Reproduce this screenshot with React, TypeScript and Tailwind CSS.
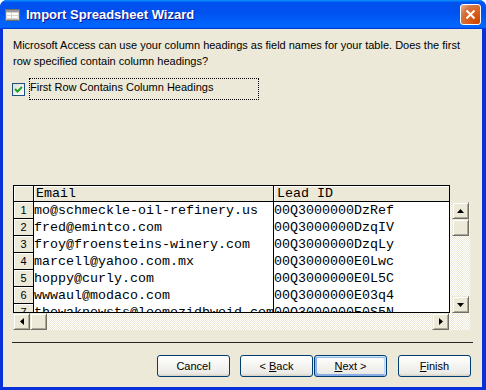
const rowData = [
  ["mo@schmeckle-oil-refinery.us", "00Q3000000DzRef"],
  ["fred@emintco.com", "00Q3000000DzqIV"],
  ["froy@froensteins-winery.com", "00Q3000000DzqLy"],
  ["marcell@yahoo.com.mx", "00Q3000000E0Lwc"],
  ["hoppy@curly.com", "00Q3000000E0L5C"],
  ["wwwaul@modaco.com", "00Q3000000E03q4"],
  ["thewaknewsts@loemozidbwoid.com", "00Q3000000E0S5N"],
];

const hatch =
  "bg-[repeating-conic-gradient(#ece9d8_0%_25%,#ffffff_0%_50%)] bg-size-[2px_2px]";

const scrollBtn =
  "w-[17px] h-[17px] shrink-0 flex items-center justify-center bg-[#ECE9D8] border border-t-[#ECE9D8] border-l-[#ECE9D8] border-r-[#716F64] border-b-[#716F64] shadow-[inset_1px_1px_#ffffff,inset_-1px_-1px_#ACA899]";

const Arrow = ({ dir }: { dir: "up" | "down" | "left" | "right" }) => {
  const pts = {
    up: "3.5,0 7,4 0,4",
    down: "0,0 7,0 3.5,4",
    left: "4,0 4,7 0,3.5",
    right: "0,0 4,3.5 0,7",
  }[dir];
  const vertical = dir === "up" || dir === "down";
  return (
    <svg width={vertical ? 7 : 4} height={vertical ? 4 : 7}>
      <polygon points={pts} fill="#000" />
    </svg>
  );
};

const Button = ({
  children,
  primary,
}: {
  children: React.ReactNode;
  primary?: boolean;
}) => (
  <div
    className={
      primary
        ? "w-[73px] h-[22px] flex items-center justify-center rounded-[3px] border border-[#003C74] bg-[linear-gradient(180deg,#ffffff,#ECEBE6_86%,#D6D0C5)] shadow-[inset_-1px_1px_#cee7ff,inset_1px_2px_#98b8ea,inset_-2px_2px_#bcd4f6,inset_1px_-1px_#89ade4,inset_2px_-2px_#89ade4] text-[11px] text-black"
        : "w-[73px] h-[22px] flex items-center justify-center rounded-[3px] border border-[#003C74] bg-[linear-gradient(180deg,#ffffff,#ECEBE6_86%,#D6D0C5)] text-[11px] text-black"
    }
  >
    <span className="whitespace-pre">{children}</span>
  </div>
);

export default function App() {
  return (
    <div className="w-[486px] h-[390px] flex flex-col bg-[#0831D9] rounded-t-[7px] overflow-hidden font-['Liberation_Sans',Arial,sans-serif] select-none">
      {/* title bar */}
      <div className="h-[29px] shrink-0 flex items-center pl-[5px] pr-[5px] bg-[linear-gradient(180deg,#0997ff,#0053ee_8%,#0050ee_40%,#0066ff_88%,#0066ff_93%,#005bff_95%,#003dd7_96%,#003dd7)]">
        <svg width="15" height="12" viewBox="0 0 15 12">
          <rect x="0.5" y="0.5" width="14" height="11" fill="#D8D4CC" stroke="#6D6D6D" />
          <rect x="1" y="1" width="13" height="2" fill="#9A9A9A" />
          <rect x="2" y="4" width="4" height="2" fill="#ffffff" />
          <rect x="7" y="4" width="6" height="2" fill="#ffffff" />
          <rect x="2" y="7" width="4" height="2" fill="#ffffff" />
          <rect x="7" y="7" width="6" height="2" fill="#ffffff" />
          <rect x="2" y="10" width="11" height="1" fill="#B0B0B0" />
        </svg>
        <span className="ml-[6px] text-[13px] font-bold text-white [text-shadow:1px_1px_#0F1089]">
          Import Spreadsheet Wizard
        </span>
        <div className="flex-1" />
        <div className="w-[21px] h-[21px] rounded-[3px] border border-white bg-[radial-gradient(circle_at_90%_90%,#CC4600_0%,#DC6527_55%,#CD7546_70%,#EE9C7A_90%)] flex items-center justify-center">
          <svg width="11" height="11" viewBox="0 0 11 11">
            <path d="M1.5 1.5 L9.5 9.5 M9.5 1.5 L1.5 9.5" stroke="#fff" strokeWidth="2" />
          </svg>
        </div>
      </div>

      {/* body */}
      <div className="flex-1 ml-[3px] mr-[4px] mb-[3px] bg-[#ECE9D8] flex flex-col text-black">
        <p className="mt-[8px] ml-[10px] text-[11px] leading-[16px]">
          Microsoft Access can use your column headings as field names for your table. Does the first
          <br />
          row specified contain column headings?
        </p>

        <div className="mt-[9px] ml-[9px] flex items-center h-[22px]">
          <div className="w-[13px] h-[13px] border border-[#1C5180] bg-[linear-gradient(135deg,#DCDCD7,#ffffff)] flex items-center justify-center">
            <svg width="9" height="9" viewBox="0 0 9 9">
              <path d="M1 4 L3.5 6.5 L8 2" stroke="#21A121" strokeWidth="2" fill="none" />
            </svg>
          </div>
          <div className="ml-[4px] w-[230px] h-[22px] border border-dotted border-black text-[11px] leading-[16px]">
            First Row Contains Column Headings
          </div>
        </div>

        {/* grid */}
        <div className="mt-[85px] ml-[10px] flex">
          <div className="w-[437px] h-[128px] border border-black bg-white overflow-hidden font-['Liberation_Mono','Courier_New',monospace] text-[13.33px] leading-[17px]">
            <div className="flex h-[16px] border-b border-black bg-[#ECE9D8]">
              <div className="w-[20px] shrink-0 border-r border-black shadow-[inset_1px_1px_#ffffff]" />
              <div className="w-[240px] shrink-0 border-r border-black pl-[2px] leading-[15px] shadow-[inset_1px_1px_#ffffff]">
                Email
              </div>
              <div className="flex-1 pl-[3px] leading-[15px] shadow-[inset_1px_1px_#ffffff]">Lead ID</div>
            </div>
            {rowData.map(([email, id], i) => (
              <div key={i} className="flex h-[17px]">
                <div className="w-[20px] shrink-0 border-r border-b border-black bg-[#ECE9D8] shadow-[inset_1px_1px_#ffffff] text-center font-['Liberation_Sans',Arial,sans-serif] text-[11px] leading-[16px]">
                  {i + 1}
                </div>
                <div className="w-[240px] shrink-0 border-r border-black whitespace-nowrap overflow-hidden">
                  {email}
                </div>
                <div className="flex-1 whitespace-nowrap overflow-hidden">{id}</div>
              </div>
            ))}
          </div>
          <div className={`w-[20px] mt-[17px] h-[111px] flex flex-col ${hatch}`}>
            <div className={`${scrollBtn} ml-[2px]`}>
              <Arrow dir="up" />
            </div>
            <div className={`${scrollBtn} ml-[2px]`} />
            <div className="flex-1" />
            <div className={`${scrollBtn} ml-[2px]`}>
              <Arrow dir="down" />
            </div>
          </div>
        </div>

        {/* horizontal scrollbar */}
        <div className={`ml-[10px] w-[457px] h-[17px] flex ${hatch}`}>
          <div className={scrollBtn}>
            <Arrow dir="left" />
          </div>
          <div className={scrollBtn} />
          <div className="flex-1" />
          <div className={`${scrollBtn} mr-[21px]`}>
            <Arrow dir="right" />
          </div>
        </div>

        <div className="mt-[12px] ml-[9px] w-[461px] h-px bg-[#262626]" />

        <div className="mt-[12px] ml-[154px] flex">
          <Button>Cancel</Button>
          <div className="ml-[10px]">
            <Button>
              {"< "}
              <span className="underline">B</span>ack
            </Button>
          </div>
          <div className="ml-[1px]">
            <Button primary>
              <span className="underline">N</span>
              {"ext >"}
            </Button>
          </div>
          <div className="ml-[11px]">
            <Button>
              <span className="underline">F</span>inish
            </Button>
          </div>
        </div>
      </div>
    </div>
  );
}
